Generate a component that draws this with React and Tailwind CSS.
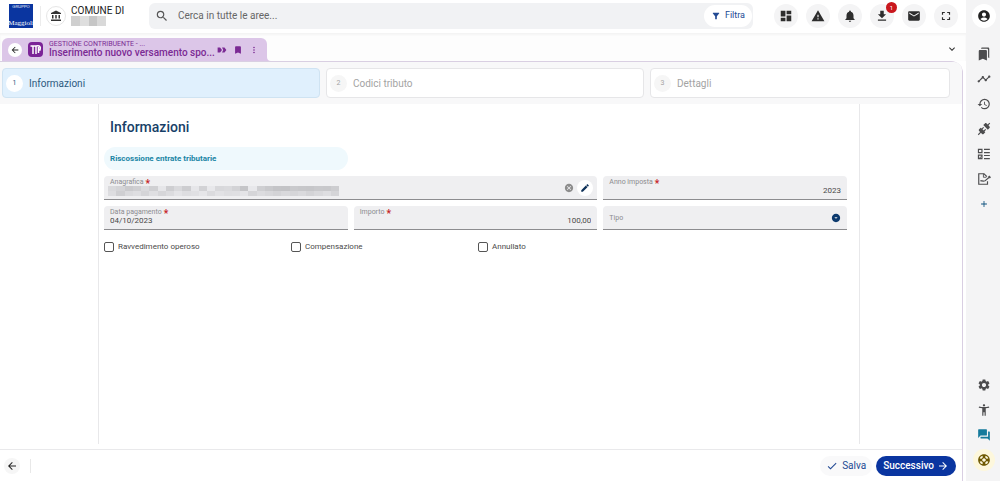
import React from "react";
import {
  MdAccountBalance, MdSearch, MdFilterAlt, MdDashboard, MdWarning, MdNotifications, MdDownload, MdMail,
  MdFullscreen, MdAccountCircle, MdBookmarks, MdTimeline, MdHistory, MdAdd, MdSettings, MdAccessibilityNew,
  MdForum, MdArrowBack, MdArrowForward, MdBookmark, MdMoreVert, MdExpandMore, MdCancel, MdEdit, MdCheck,
  MdArrowDropDownCircle, MdSupport,
} from "react-icons/md";

function PlugIcon() {
  return (
    <svg viewBox="0 0 24 24" className="size-3.5" fill="currentColor" aria-hidden="true">
      <path d="M21.4 7.5c.8.8.8 2.1 0 2.8l-2.8 2.8-7.8-7.8 2.8-2.8c.8-.8 2.1-.8 2.8 0l1.8 1.8 3-3L22.6 2.7l-3 3 1.8 1.8ZM15.6 13.3l-1.4-1.4-2.8 2.8-2.1-2.1 2.8-2.8-1.4-1.4-2.8 2.8-1.5-1.4-2.8 2.8c-.8.8-.8 2.1 0 2.8l1.8 1.8-4 4 1.4 1.4 4-4 1.8 1.8c.8.8 2.1.8 2.8 0l2.8-2.8-1.4-1.4 2.8-2.9Z" />
    </svg>
  );
}

function TaskListIcon() {
  return (
    <svg viewBox="0 0 24 24" className="size-3.5" fill="none" stroke="currentColor" strokeWidth="2" aria-hidden="true">
      <path d="M2.500 4h6v5.500h-6zM2.500 14h6v6h-6zM12 4h10M12 9.500h10M12 14.500h10M12 20h10" />
      <path d="M4 17l1.500 1.500 3-4" strokeWidth="1.500" />
    </svg>
  );
}

function SignIcon() {
  return (
    <svg viewBox="0 0 24 24" className="size-3.5" fill="none" stroke="currentColor" strokeWidth="2" aria-hidden="true">
      <path d="M18 16v5H3V3h9l5 5" />
      <path d="M11 3v6h5" strokeWidth="1.500" />
      <path d="M6 16c2-4 2 2 4-1 1 2 2 0 4 0l7-6" strokeWidth="1.800" />
      <path d="M20 7l3 3" strokeWidth="3" />
    </svg>
  );
}

const topActions = [
  { label: "Dashboard", Icon: MdDashboard },
  { label: "Avvisi", Icon: MdWarning },
  { label: "Notifiche", Icon: MdNotifications },
  { label: "Download", Icon: MdDownload, badge: 1 },
  { label: "Messaggi", Icon: MdMail },
  { label: "Schermo intero", Icon: MdFullscreen },
];

const sideTop = [
  { label: "Segnalibri", icon: <MdBookmarks className="size-3.5" /> },
  { label: "Andamento", icon: <MdTimeline className="size-3.5" /> },
  { label: "Cronologia", icon: <MdHistory className="size-3.5" /> },
  { label: "Connessioni", icon: <PlugIcon /> },
  { label: "Attività", icon: <TaskListIcon /> },
  { label: "Firma", icon: <SignIcon /> },
  { label: "Aggiungi", icon: <MdAdd className="size-2.5 text-[#0b4f7d]" /> },
];

const steps = ["Informazioni", "Codici tributo", "Dettagli"];

const maskTop = [
  "bg-[#d9d9dc]", "bg-[#d4d4d7]", "bg-[#cacacd]", "bg-[#cfcfd2]", "bg-[#dadadd]", "bg-[#d0d0d3]", "bg-[#e6e6e9]",
  "bg-[#ceced1]", "bg-[#d9d9dc]", "bg-[#cdcdd0]", "bg-[#e6e6e9]", "bg-[#d2d2d5]", "bg-[#e8e8eb]", "bg-[#d8d8db]",
  "bg-[#dadadd]", "bg-[#d3d3d6]", "bg-[#c5c5c8]", "bg-[#e8e8eb]", "bg-[#cfcfd2]", "bg-[#c9c9cc]", "bg-[#c4c4c7]",
  "bg-[#c3c3c6]", "bg-[#c9c9cc]", "bg-[#c7c7ca]", "bg-[#c6c6c9]", "bg-[#c9c9cc]", "bg-[#c8c8cb]", "bg-[#cdcdd0]",
];
const maskBottom = [
  "bg-[#dddde0]", "bg-[#cfcfd2]", "bg-[#dadadd]", "bg-[#dedee1]", "bg-[#d5d5d8]", "bg-[#dfdfe2]", "bg-[#d6d6d9]",
  "bg-[#dcdcdf]", "bg-[#e4e4e7]", "bg-[#dedee1]", "bg-[#e0e0e3]", "bg-[#e6e6e9]", "bg-[#dbdbde]", "bg-[#e2e2e5]",
  "bg-[#dedee1]", "bg-[#dfdfe2]", "bg-[#e4e4e7]", "bg-[#d5d5d8]", "bg-[#dcdcdf]", "bg-[#d8d8db]", "bg-[#d4d4d7]",
  "bg-[#d9d9dc]", "bg-[#d6d6d9]", "bg-[#dadadd]", "bg-[#d4d4d7]", "bg-[#d9d9dc]", "bg-[#dedee1]", "bg-[#d5d5d8]",
];

function Header() {
  return (
    <header className="flex h-[33px] shrink-0 items-center bg-white pb-0.5 pl-[9px] pr-2">
      <div className="flex h-6 w-6 flex-col items-center justify-between overflow-hidden bg-[#0a35a0] text-white">
        <span className="font-['Liberation_Sans',sans-serif] text-[4px] leading-[6px]">GRUPPO</span>
        <span className="font-['Liberation_Serif',serif] text-[7px] leading-[9px]">Maggioli</span>
      </div>
      <span className="ml-[7px] h-5 w-px bg-[#ececec]" />
      <div className="ml-[5px] flex size-5 items-center justify-center rounded-full border border-[#e6e6e6] text-[#333]">
        <MdAccountBalance className="size-3" />
      </div>
      <div className="ml-[5px] w-[78px] pt-px text-[10px] leading-[10px] text-[#222]">
        <div>COMUNE DI</div>
        <div className="flex h-2.5 w-[35px]" aria-hidden="true">
          <span className="flex-1 bg-[#cfcfcf]" />
          <span className="flex-1 bg-[#dedede]" />
          <span className="flex-1 bg-[#c6c6c6]" />
          <span className="flex-1 bg-[#d9d9d9]" />
        </div>
      </div>
      <form className="flex h-[26px] flex-1 items-center rounded-md bg-[#f1f2f4] pl-1.5 pr-px" role="search">
        <MdSearch className="size-3.5 text-[#555]" />
        <input
          type="search"
          aria-label="Cerca"
          placeholder="Cerca in tutte le aree..."
          className="ml-[9px] min-w-0 flex-1 bg-transparent text-[10px] leading-[14px] outline-none placeholder:text-[#666]"
        />
        <button type="button" className="flex h-[22px] items-center gap-1 rounded-full bg-white px-[7px] text-[9px] text-[#234a94]">
          <MdFilterAlt className="size-2.5" />
          Filtra
        </button>
      </form>
      <nav className="ml-[21px] flex gap-2">
        {topActions.map(({ label, Icon, badge }) => (
          <button key={label} type="button" aria-label={label} className="relative flex size-6 items-center justify-center rounded-full bg-[#f4f4f5] text-[#2d2d2d]">
            <Icon className="size-3.5" />
            {badge && (
              <span className="absolute -top-0.5 right-[-3px] flex size-[11px] items-center justify-center rounded-full bg-[#c9171d] text-[6px] text-white">
                {badge}
              </span>
            )}
          </button>
        ))}
      </nav>
    </header>
  );
}

function TabBar() {
  return (
    <div className="flex h-7 shrink-0 items-end bg-[#fdfdfd] pr-2 shadow-[inset_0_2px_2px_#f4f4f4]">
      <div className="ml-0.5 flex h-[23px] w-[265px] items-center rounded-t-md bg-[#dcc6e8] pl-1.5 text-[#7b2a94]">
        <button type="button" aria-label="Indietro" className="flex size-3.5 items-center justify-center rounded-full bg-white text-[#222]">
          <MdArrowBack className="size-2.5" />
        </button>
        <span className="ml-1.5 flex size-[15px] items-center justify-center rounded bg-[#7b2397] text-white">
          <svg viewBox="0 0 15 15" className="size-[15px]" fill="none" stroke="currentColor" strokeWidth="1.5" aria-hidden="true">
            <path d="M2.500 4H8M5 4v8M8 12V4c4-1 5 1 4 4h-1M10.500 5v6" />
          </svg>
        </span>
        <div className="ml-1.5 w-[164px] whitespace-nowrap">
          <div className="text-[7px] leading-[7px]">GESTIONE CONTRIBUENTE - ...</div>
          <div className="text-[10px] font-medium leading-[10px]">Inserimento nuovo versamento spo...</div>
        </div>
        <button type="button" aria-label="Etichette" className="ml-1">
          <svg viewBox="0 0 16 12" className="h-2 w-2.5" fill="currentColor" aria-hidden="true">
            <path d="M1 2h4l3 4-3 4H1zM8 2h4l3 4-3 4H8l2-4z" />
          </svg>
        </button>
        <button type="button" aria-label="Segnalibro" className="ml-1.5"><MdBookmark className="size-2.5" /></button>
        <button type="button" aria-label="Altro" className="ml-1.5"><MdMoreVert className="size-2.5" /></button>
      </div>
      <svg viewBox="0 0 4 4" className="size-1 text-[#dcc6e8]" fill="currentColor" aria-hidden="true">
        <path d="M0 0c0 2.500 1.500 4 4 4H0z" />
      </svg>
      <button type="button" aria-label="Espandi" className="mb-1.5 ml-auto text-[#333]"><MdExpandMore className="size-3" /></button>
    </div>
  );
}

function Stepper() {
  return (
    <ol className="grid h-[42px] shrink-0 grid-cols-[318fr_318fr_300fr] gap-1.5 rounded-tr-lg bg-[#f8f8f9] py-1.5 pl-0.5 pr-3">
      {steps.map((name, i) => (
        <li key={name}>
          <button
            type="button"
            className={
              i === 0
                ? "flex h-[30px] w-full items-center gap-1.5 rounded border border-[#cfe3f2] bg-[#e0f0fd] pl-[3px] text-[10px] text-[#2c5a80]"
                : "flex h-[30px] w-full items-center gap-1.5 rounded border border-[#e6e6e8] bg-white pl-[3px] text-[10px] text-[#a3a3a3]"
            }
          >
            <span className={i === 0 ? "flex size-[17px] items-center justify-center rounded-full bg-white text-[7px]" : "flex size-[17px] items-center justify-center rounded-full bg-[#f6f6f6] text-[7px]"}>
              {i + 1}
            </span>
            {name}
          </button>
        </li>
      ))}
    </ol>
  );
}

const fieldBox = "flex h-6 rounded-t border-b border-[#8c8c8f] bg-[#efeff1]";
const labelText = "text-[7px] leading-[8px] text-[#8b8b8f]";

function Required() {
  return <span className="text-[10px] font-bold leading-[12px] text-[#c5221f]">*</span>;
}

function TextField({ id, label, value, right }) {
  return (
    <div className={`${fieldBox} flex-col px-1.5 pt-0.5`}>
      <label htmlFor={id} className={`${labelText} flex h-2 gap-0.5`}>{label}<Required /></label>
      <input
        id={id}
        defaultValue={value}
        className={right
          ? "h-[9px] w-full bg-transparent text-right text-[8px] leading-[9px] text-[#4a4a4a] outline-none"
          : "h-[9px] w-full bg-transparent text-[8px] leading-[9px] text-[#4a4a4a] outline-none"}
      />
    </div>
  );
}

function Form() {
  return (
    <div className="flex flex-1 pr-1">
      <form className="mx-auto w-full max-w-[762px] border-x border-[#e8e8ea] pl-[5px] pr-3 pt-[13px]">
        <h1 className="ml-1.5 text-[14px] font-medium leading-[20px] text-[#173f68]">Informazioni</h1>
        <div className="mt-2.5 grid grid-cols-3 gap-1.5">
          <h2 className="flex h-[23px] items-center rounded-full bg-[#eff9fd] px-1.5 text-[8px] font-bold text-[#1b86a5]">
            Riscossione entrate tributarie
          </h2>
          <div className={`${fieldBox} col-span-2 col-start-1 items-center justify-between pl-1.5 pr-1`}>
            <div className="self-start pt-0.5">
              <label htmlFor="anagrafica" className={`${labelText} flex h-2 gap-0.5`}>Anagrafica<Required /></label>
              <output id="anagrafica" className="-ml-0.5 block w-[231px]">
                <span className="flex h-[5px]">{maskTop.map((c, i) => <span key={i} className={`flex-1 ${c}`} />)}</span>
                <span className="flex h-[5px]">{maskBottom.map((c, i) => <span key={i} className={`flex-1 ${c}`} />)}</span>
              </output>
            </div>
            <div className="flex items-center gap-[3px]">
              <button type="button" aria-label="Cancella" className="text-[#8d8d8d]"><MdCancel className="size-2.5" /></button>
              <button type="button" aria-label="Modifica" className="flex size-4 items-center justify-center rounded-full bg-white text-[#0d3058]">
                <MdEdit className="size-2.5" />
              </button>
            </div>
          </div>
          <TextField id="anno" label="Anno imposta" value="2023" right />
          <TextField id="data" label="Data pagamento" value="04/10/2023" />
          <TextField id="importo" label="Importo" value="100,00" right />
          <div className={`${fieldBox} items-center px-1.5`}>
            <label htmlFor="tipo" className={labelText}>Tipo</label>
            <select id="tipo" className="h-full min-w-0 flex-1 appearance-none bg-transparent text-[8px] outline-none">
              <option></option>
            </select>
            <MdArrowDropDownCircle className="pointer-events-none size-2.5 text-[#0d3a6e]" />
          </div>
        </div>
        <div className="mt-3 grid grid-cols-4 gap-[5px] text-[8px] leading-[10px] text-[#4a4a4a]">
          {["Ravvedimento operoso", "Compensazione", "Annullato"].map((name) => (
            <label key={name} className="flex items-center gap-1">
              <input type="checkbox" className="size-2.5 appearance-none rounded-xs border border-[#555] checked:bg-[#0a35a0]" />
              {name}
            </label>
          ))}
        </div>
      </form>
    </div>
  );
}

function Footer() {
  return (
    <footer className="mt-[5px] flex h-8 shrink-0 items-center border-t border-[#e9e9eb] pl-1 pr-1.5">
      <button type="button" aria-label="Indietro" className="flex size-4 items-center justify-center rounded-full bg-[#f6f6f6] text-[#222]">
        <MdArrowBack className="size-3" />
      </button>
      <span className="ml-2.5 h-3.5 w-px bg-[#e8e8e8]" />
      <button type="button" className="ml-auto flex h-5 items-center gap-1 rounded-full bg-[#f9f9fa] px-1.5 text-[10px] text-[#234a94]">
        <MdCheck className="size-3" />
        Salva
      </button>
      <button type="button" className="ml-1 flex h-5 items-center gap-[3px] rounded-full bg-[#0a35a0] px-[7px] text-[10px] font-medium text-white">
        Successivo
        <MdArrowForward className="size-3" />
      </button>
    </footer>
  );
}

function Sidebar() {
  return (
    <aside className="flex w-[34px] shrink-0 flex-col items-center bg-[#f4f4f5] pl-0.5 text-[#4d4d4f]">
      <button type="button" aria-label="Profilo" className="mt-1 flex size-6 items-center justify-center rounded-full bg-white text-[#222]">
        <MdAccountCircle className="size-3.5" />
      </button>
      <div className="mt-[15px] flex flex-col gap-[3px]">
        {sideTop.map(({ label, icon }) => (
          <button key={label} type="button" aria-label={label} className="flex size-[22px] items-center justify-center">{icon}</button>
        ))}
      </div>
      <div className="mb-2.5 mt-auto flex flex-col gap-[3px]">
        <button type="button" aria-label="Impostazioni" className="flex size-[22px] items-center justify-center"><MdSettings className="size-3.5" /></button>
        <button type="button" aria-label="Accessibilità" className="flex size-[22px] items-center justify-center"><MdAccessibilityNew className="size-3.5" /></button>
        <button type="button" aria-label="Chat" className="flex size-[22px] items-center justify-center text-[#157a9c]"><MdForum className="size-3.5" /></button>
        <button type="button" aria-label="Assistenza" className="flex size-[22px] items-center justify-center rounded-full bg-[#fdf7dc] text-[#6e5800]"><MdSupport className="size-3.5" /></button>
      </div>
    </aside>
  );
}

export default function App() {
  return (
    <div className="flex min-h-screen bg-white font-[Roboto,sans-serif]">
      <div className="flex min-w-0 flex-1 flex-col">
        <Header />
        <TabBar />
        <main className="mr-[3px] flex flex-1 flex-col rounded-tr-xl border-r border-t border-[#d9cfe2]">
          <Stepper />
          <Form />
          <Footer />
        </main>
      </div>
      <Sidebar />
    </div>
  );
}
